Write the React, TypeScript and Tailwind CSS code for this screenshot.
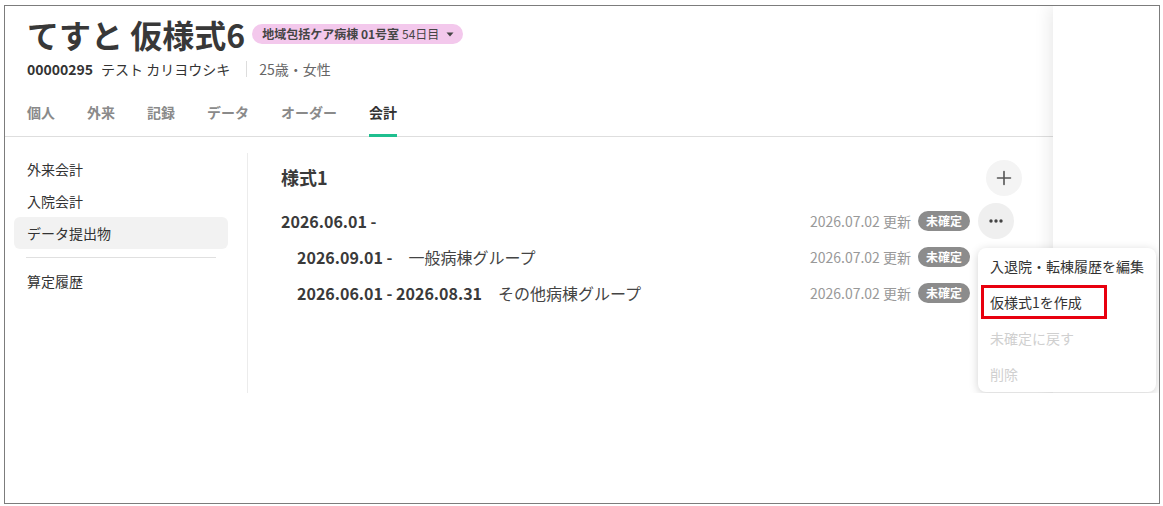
import React from 'react';

const tabs = ['個人', '外来', '記録', 'データ', 'オーダー', '会計'];
const sideItems = ['外来会計', '入院会計', 'データ提出物'];

type Period = {
  range: string;
  group?: string;
  indent?: boolean;
  menu?: boolean;
};

const periods: Period[] = [
  { range: '2026.06.01 -', menu: true },
  { range: '2026.09.01 -', group: '一般病棟グループ', indent: true },
  { range: '2026.06.01 - 2026.08.31', group: 'その他病棟グループ', indent: true },
];

const menuItems = [
  { label: '入退院・転棟履歴を編集', disabled: false },
  { label: '仮様式1を作成', disabled: false, marked: true },
  { label: '未確定に戻す', disabled: true },
  { label: '削除', disabled: true },
];

const Caret = () => (
  <svg width="8" height="5" viewBox="0 0 8 5" className="ml-[7px]">
    <path d="M0.5 0.5h7L4 4.5z" fill="#444" />
  </svg>
);

const PlusIcon = () => (
  <svg width="16" height="16" viewBox="0 0 16 16">
    <path d="M8 1.5v13M1.5 8h13" stroke="#555" strokeWidth="1.6" strokeLinecap="round" />
  </svg>
);

const DotsIcon = () => (
  <svg width="16" height="6" viewBox="0 0 16 6">
    <circle cx="3" cy="3" r="1.7" fill="#444" />
    <circle cx="8" cy="3" r="1.7" fill="#444" />
    <circle cx="13" cy="3" r="1.7" fill="#444" />
  </svg>
);

const RowMenu = () => (
  <div className="absolute left-0 top-[45px] z-20 w-[178px] rounded-lg bg-white shadow-[0_2px_10px_rgba(0,0,0,0.18)]">
    {menuItems.map((item) => (
      <div
        key={item.label}
        className={`relative flex h-9 items-center px-3 text-[14px] whitespace-nowrap ${
          item.disabled ? 'text-[#d0d0d0]' : 'text-[#333]'
        }`}
      >
        {item.label}
        {item.marked && (
          <span className="pointer-events-none absolute left-[3px] top-[1px] h-[34px] w-[126px] border-[3px] border-[#e8000e]" />
        )}
      </div>
    ))}
  </div>
);

export default function App() {
  return (
    <div
      className="h-[506px] w-[1163px] bg-white pl-[4px] pt-[5px] text-[#333]"
      style={{ fontFamily: '"Noto Sans CJK JP", "Noto Sans", sans-serif' }}
    >
      <div className="h-[499px] w-[1156px] border border-[#7c7c7c]">
        <div className="flex h-[387px] overflow-hidden">
          {/* patient screen */}
          <div className="flex w-[1048px] flex-col">
            <header className="border-b border-[#dedede] pl-[22px] pt-[8px]">
              <div className="flex items-center">
                <h1 className="text-[32px] font-bold leading-[40px] text-[#383838]">てすと 仮様式6</h1>
                <button className="ml-[7px] flex h-5 items-center rounded-full bg-[#f3c8ec] pl-[10px] pr-[9px] text-[12px] text-[#454545]">
                  <span className="font-bold">地域包括ケア病棟 01号室</span>
                  <span className="ml-[3px]">54日目</span>
                  <Caret />
                </button>
              </div>
              <div className="mt-[5px] flex items-center text-[14px] leading-5">
                <span className="font-bold">00000295</span>
                <span className="ml-2">テスト カリヨウシキ</span>
                <span className="ml-4 mr-3 h-4 w-px bg-[#dddddd]" />
                <span className="text-[#666]">25歳・女性</span>
              </div>
              <nav className="-mb-px mt-[23px] flex gap-8">
                {tabs.map((t) => (
                  <div
                    key={t}
                    className={`border-b-[3px] pb-[12px] text-[14px] font-bold leading-5 ${
                      t === '会計' ? 'border-[#1fbf8f] text-[#333]' : 'border-transparent text-[#8a8a8a]'
                    }`}
                  >
                    {t}
                  </div>
                ))}
              </nav>
            </header>

            <div className="flex flex-1 pt-4">
              <aside className="w-[243px] border-r border-[#ececec] pl-[9px] pr-[19px] text-[14px]">
                {sideItems.map((s) => (
                  <div
                    key={s}
                    className={`flex h-8 items-center rounded-md pl-[13px] ${s === 'データ提出物' ? 'bg-[#f2f2f2]' : ''}`}
                  >
                    {s}
                  </div>
                ))}
                <div className="mx-3 my-2 h-px bg-[#e0e0e0]" />
                <div className="-mt-px flex h-8 items-center pl-[13px]">算定履歴</div>
              </aside>

              <section className="flex-1 pl-[33px] pr-[31px] pt-[7px]">
                <div className="flex h-9 items-center justify-between">
                  <h2 className="-mt-[2px] text-[18px] font-bold text-[#3a3a3a]">様式1</h2>
                  <button className="flex h-9 w-9 items-center justify-center rounded-full bg-[#f4f4f4]">
                    <PlusIcon />
                  </button>
                </div>
                <div className="mt-[7px] pr-2">
                  {periods.map((p, i) => (
                    <div key={i} className={`flex h-9 items-center justify-between ${p.indent ? 'pl-4' : ''}`}>
                      <div className="flex items-center text-[16px]">
                        <span className="font-bold text-[#3a3a3a]">{p.range}</span>
                        {p.group && <span className="ml-4 text-[#444]">{p.group}</span>}
                      </div>
                      <div className="flex items-center">
                        <span className="text-[14px] text-[#999]">2026.07.02 更新</span>
                        <span className="ml-[7px] flex h-5 w-[52px] items-center justify-center rounded-full bg-[#8c8c8c] text-[12px] font-bold text-white">
                          未確定
                        </span>
                        {p.menu ? (
                          <div className="relative ml-2">
                            <button className="flex h-9 w-9 items-center justify-center rounded-full bg-[#efefef]">
                              <DotsIcon />
                            </button>
                            <RowMenu />
                          </div>
                        ) : (
                          <div className="ml-2 w-9" />
                        )}
                      </div>
                    </div>
                  ))}
                </div>
              </section>
            </div>
          </div>

          {/* side panel */}
          <div className="relative z-10 flex-1 bg-white shadow-[-3px_0_16px_rgba(0,0,0,0.09)]" />
        </div>
      </div>
    </div>
  );
}
